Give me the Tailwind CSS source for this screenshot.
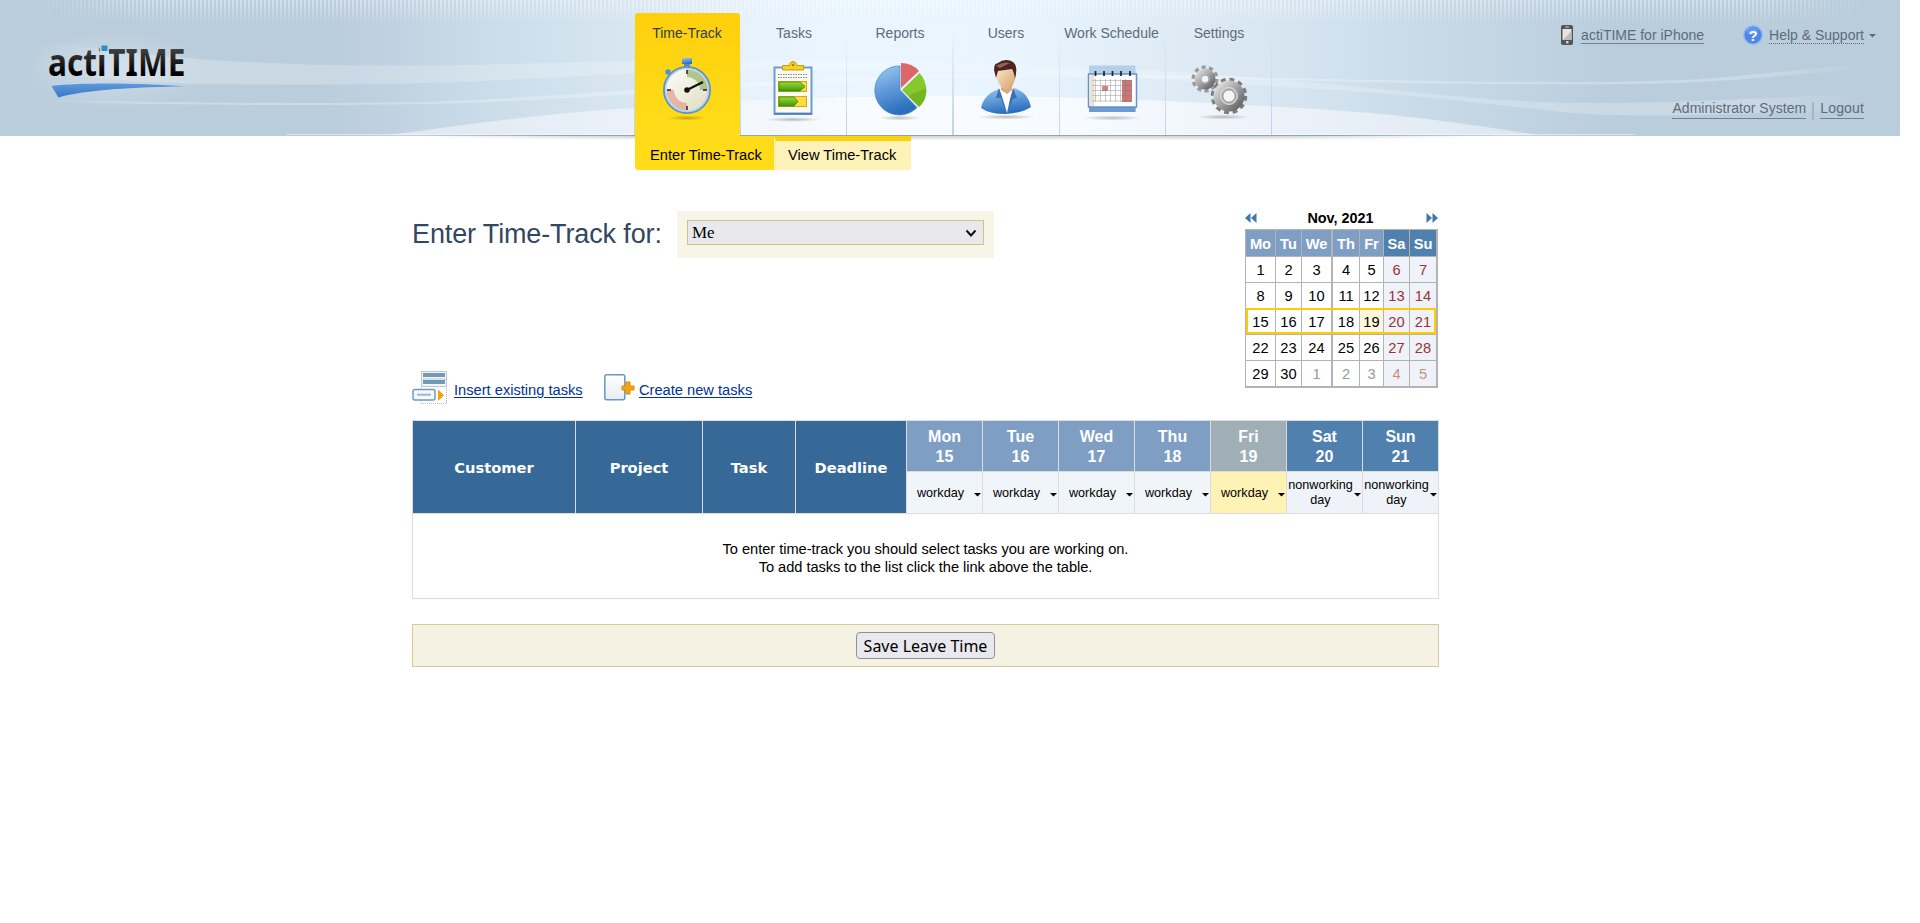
<!DOCTYPE html>
<html lang="en">
<head>
<meta charset="utf-8">
<title>actiTIME - Enter Time-Track</title>
<script src="https://cdn.jsdelivr.net/npm/@tailwindcss/browser@4"></script>
</head>
<body class="bg-white font-['Liberation_Sans',Arial,sans-serif] text-black overflow-hidden">
<header class="relative w-[1900px] h-[170px]">
  <svg class="absolute left-0 top-0" width="1900" height="142" viewBox="0 0 1900 142">
    <defs>
      <linearGradient id="bg"><stop offset="0" stop-color="#bacddc"/><stop offset=".17" stop-color="#bacddc"/><stop offset=".21" stop-color="#c1d2e2"/><stop offset=".26" stop-color="#cbdde9"/><stop offset=".33" stop-color="#d8e6f1"/><stop offset=".39" stop-color="#e6f1fb"/><stop offset=".44" stop-color="#eaf6ff"/><stop offset=".53" stop-color="#e8f4fe"/><stop offset=".6" stop-color="#e0edf7"/><stop offset=".67" stop-color="#d8e6f1"/><stop offset=".75" stop-color="#c8dae8"/><stop offset=".85" stop-color="#bacddc"/><stop offset="1" stop-color="#bacddc"/></linearGradient>
      <linearGradient id="fade" x2="0" y2="1"><stop stop-color="#fff" stop-opacity=".42"/><stop offset="1" stop-color="#fff" stop-opacity="0"/></linearGradient>
      <pattern id="st" width="4" height="24" patternUnits="userSpaceOnUse"><rect width="2" height="24" fill="url(#fade)"/></pattern>
      <linearGradient id="mk"><stop offset=".015" stop-color="#000"/><stop offset=".08" stop-color="#fff"/><stop offset=".92" stop-color="#fff"/><stop offset=".985" stop-color="#000"/></linearGradient>
      <mask id="m"><rect width="1900" height="142" fill="url(#mk)"/></mask>
      <linearGradient id="hill"><stop stop-color="#dfe7ee"/><stop offset=".25" stop-color="#edf3fb"/><stop offset=".4" stop-color="#f8fbff"/><stop offset=".6" stop-color="#f7faff"/><stop offset=".77" stop-color="#edf2fa"/><stop offset="1" stop-color="#dce6ee"/></linearGradient>
      <linearGradient id="ln"><stop stop-color="#8fa5b5" stop-opacity="0"/><stop offset=".15" stop-color="#8fa5b5"/><stop offset=".85" stop-color="#8fa5b5"/><stop offset="1" stop-color="#8fa5b5" stop-opacity="0"/></linearGradient>
      <linearGradient id="sh"><stop stop-color="#aaa" stop-opacity="0"/><stop offset=".2" stop-color="#aaa" stop-opacity=".45"/><stop offset=".8" stop-color="#aaa" stop-opacity=".45"/><stop offset="1" stop-color="#aaa" stop-opacity="0"/></linearGradient>
      <radialGradient id="glow"><stop stop-color="#fff" stop-opacity=".3"/><stop offset="1" stop-color="#fff" stop-opacity="0"/></radialGradient>
      <linearGradient id="dv" x2="0" y2="1"><stop stop-color="#c2cfe6" stop-opacity="0"/><stop offset="1" stop-color="#c2cfe6"/></linearGradient>
    </defs>
    <rect width="1900" height="136" fill="url(#bg)"/>
    <g mask="url(#m)">
      <rect width="1900" height="24" fill="url(#st)"/>
      <path d="M20 42C100 46 150 58 250 62C390 69 480 64 640 61C820 59 1080 61 1280 80C1430 92 1500 104 1600 103C1730 102 1800 95 1900 93V108C1780 112 1640 120 1560 112C1440 98 1370 91 1280 87C1050 70 830 67 640 73C500 80 420 87 200 84C130 83 80 76 20 70Z" fill="#fff" fill-opacity=".22"/>
      <path d="M30 99C180 103 300 104 420 102C560 98 700 82 900 76C1060 72 1160 76 1280 78C1460 82 1620 84 1700 79C1770 74 1820 66 1890 63V67C1820 71 1750 82 1640 84C1480 86 1300 80 1240 79C1050 75 960 77 880 80C710 88 560 101 430 104C300 106 180 105 30 102Z" fill="#fff" fill-opacity=".26"/>
    </g>
    <ellipse cx="115" cy="70" rx="95" ry="40" fill="url(#glow)"/>
    <path d="M388 135C500 120 560 112 635 108C740 100 800 97 950 96C1080 96 1180 101 1280 107C1400 113 1460 123 1538 135Z" fill="url(#hill)"/>
    <rect x="286" y="134" width="1349" height="1" fill="#fff" opacity=".45"/>
    <rect x="400" y="135" width="1100" height="1" fill="url(#ln)"/>
    <rect x="420" y="136" width="1060" height="2" fill="url(#sh)"/>
    <rect x="480" y="138" width="960" height="2" fill="url(#sh)" opacity=".35"/>
    <g fill="url(#dv)"><rect x="634" y="30" width="1" height="105"/><rect x="740" y="30" width="1" height="105"/><rect x="846" y="30" width="1" height="105"/><rect x="952" y="30" width="2" height="105"/><rect x="1059" y="30" width="1" height="105"/><rect x="1165" y="30" width="1" height="105"/><rect x="1271" y="30" width="1" height="105"/></g>
  </svg>

  <div class="relative flex">
    <div class="w-[635px] h-[136px] shrink-0">
      <svg width="240" height="110" viewBox="0 0 240 110">
        <defs><linearGradient id="lg" gradientUnits="userSpaceOnUse" x1="0" y1="48" x2="0" y2="76"><stop stop-color="#444"/><stop offset=".9" stop-color="#000"/></linearGradient><linearGradient id="sw" x2="0" y2="1"><stop stop-color="#5e99d8"/><stop offset="1" stop-color="#3478cf"/></linearGradient><clipPath id="cut"><path d="M40 40H100V90H40ZM100 54H112V90H100ZM109 40H200V90H109Z"/></clipPath></defs>
        <g clip-path="url(#cut)"><text x="48" y="75.7" font-family="Noto Sans" font-weight="700" font-size="37" textLength="137.500" lengthAdjust="spacingAndGlyphs" fill="url(#lg)">acti<tspan dx="1">TIME</tspan></text></g>
        <rect x="101.500" y="45.500" width="6" height="5.500" fill="#2f8acb"/>
        <path d="M51.500 86C85 82.500 140 83 185 86.600C135 87 85 90 58.500 97.500Z" fill="url(#sw)"/>
      </svg>
    </div>
    <div>
      <nav class="flex pt-[13px] h-[136px] text-[14px] leading-4 text-[#5d6c7b]">
        <a class="w-[106px] pr-[2px] flex flex-col items-center pt-3 relative text-[#2f3d48]"><span class="absolute left-0 top-0 w-[105px] h-[124px] rounded-t-[3px] bg-linear-to-b from-[#ffcf0b] to-[#ffdd1a]"></span><span class="relative">Time-Track</span>
          <svg class="relative mt-4" width="64" height="66" viewBox="0 0 64 66"><defs><linearGradient id="fc" x2="1" y2="1"><stop stop-color="#fff"/><stop offset="1" stop-color="#dedbbb"/></linearGradient><radialGradient id="shd"><stop stop-color="#000" stop-opacity=".25"/><stop offset="1" stop-color="#000" stop-opacity="0"/></radialGradient><linearGradient id="bl" x2=".3" y2="1"><stop stop-color="#9ccaf6"/><stop offset="1" stop-color="#2c6fbe"/></linearGradient></defs>
            <ellipse cx="32" cy="61" rx="20" ry="2.500" fill="url(#shd)"/><path d="M27 1H37V7H27Z" fill="url(#bl)"/><rect x="29" y="7" width="6" height="3" fill="#6b8aa2"/><circle cx="13" cy="15" r="2.700" fill="#4f92d7"/><path d="m14 16 4 4" stroke="#4f92d7" stroke-width="2"/>
            <circle cx="32" cy="33" r="23" fill="url(#fc)" stroke="#5a93cd" stroke-width="2"/><circle cx="32" cy="33" r="21.500" fill="none" stroke="#b5cfe6" stroke-width="1.500"/>
            <path d="M32 12.500A20.500 20.500 0 0 1 52.500 33H45A13 13 0 0 0 32 20Z" fill="#9cb56c" opacity=".75"/><path d="M32 53.500A20.500 20.500 0 0 1 11.500 33H19A13 13 0 0 0 32 46Z" fill="#e3aaa0" opacity=".85"/>
            <path d="M32 13v4M32 49v4M12 33h4M48 33h4" stroke="#222" stroke-width="1.500"/><path d="M32 33 48 25" stroke="#111" stroke-width="2.200"/><circle cx="32" cy="33" r="2.800" fill="#111"/></svg></a>
        <a class="w-[106px] flex flex-col items-center pt-3"><span>Tasks</span>
          <svg class="mt-4 mr-[2px]" width="64" height="66" viewBox="0 0 64 66"><defs><linearGradient id="gr" x2="0" y2="1"><stop stop-color="#9bdc3c"/><stop offset="1" stop-color="#3f9808"/></linearGradient></defs><ellipse cx="32" cy="62.500" rx="28" ry="2.500" fill="url(#shd)"/>
            <rect x="13.500" y="10.500" width="37" height="46" fill="#fbfbf2" stroke="#6c9bd0" stroke-width="2"/><path d="M13 57H51" stroke="#3d77b7" stroke-width="1.500"/><path d="M21.500 13V8.500h7q0-4 3.500-4t3.500 4H42.500V13Z" fill="#f7d11d" stroke="#c49a10"/><circle cx="32" cy="8" r="1.300" fill="#a98000"/>
            <path d="M17 17.500H47M17 20.500H47" stroke="#888" stroke-dasharray="1.500 1"/><rect x="17.500" y="24.500" width="28" height="10" fill="#ffdc3b" stroke="#c9ae1c"/><path d="M18 25H39L44 29.500 39 34H18Z" fill="url(#gr)" stroke="#3c8808" stroke-width=".8"/><rect x="17.500" y="39.500" width="28" height="10" fill="#ffdc3b" stroke="#c9ae1c"/><path d="M18 40H33L37 44.500 33 49H18Z" fill="url(#gr)" stroke="#3c8808" stroke-width=".8"/></svg></a>
        <a class="w-[106px] flex flex-col items-center pt-3"><span>Reports</span>
          <svg class="mt-4" width="64" height="66" viewBox="0 0 64 66"><ellipse cx="32" cy="61" rx="21" ry="2.500" fill="url(#shd)"/><path d="M32 33V9A24.500 24.500 0 1 0 49 50.500Z" fill="url(#bl)" stroke="#4a82c4" stroke-width=".7"/><path d="M33 31V6Q44 6 51 14Z" fill="#dc6669"/><path d="M34 33 51.500 16Q58 23 58.500 34 58 44 51 50Z" fill="#87c82c"/><path d="M40 39 58 31Q59 43 51 50Z" fill="#59980c" opacity=".4"/></svg></a>
        <a class="w-[106px] flex flex-col items-center pt-3"><span>Users</span>
          <svg class="mt-4" width="64" height="66" viewBox="0 0 64 66"><defs><linearGradient id="skin" x2="1" y2="1"><stop stop-color="#fbebca"/><stop offset="1" stop-color="#d4a16b"/></linearGradient></defs><ellipse cx="32" cy="60" rx="29" ry="2.500" fill="url(#shd)"/><path d="M7 51Q10 37 25 32L32 50 40 31Q54 35 57 50 48 56 32 57 15 57 7 51Z" fill="url(#bl)"/><path d="M26 31 39 30 38 42 33 56Z" fill="#fff"/><path d="M25 31 22 41 27 41 32 56 28 40ZM39 31 43 41 39 42 33 56 36 42Z" fill="#3b71af"/><path d="M28 25H38V33L33 37 27 33Z" fill="#d8a978"/><path d="M22 12Q31 7 41 12V22Q38 33 33 33 27 33 23 22Z" fill="url(#skin)"/><path d="M21 17Q18 7 24 6 29 2 36 3.500 44 6 42 17L41 22Q40 15 38 12L24 14 22 21Z" fill="#4d2420"/><path d="M22 9Q29 4 36 6L26 11Z" fill="#93635a"/></svg></a>
        <a class="w-[107px] pr-[2px] flex flex-col items-center pt-3"><span class="whitespace-nowrap">Work Schedule</span>
          <svg class="mt-4" width="64" height="66" viewBox="0 0 64 66"><ellipse cx="32" cy="61" rx="29" ry="2.500" fill="url(#shd)"/><rect x="9" y="8.500" width="46.500" height="46" rx="1" fill="#b3cfea"/><rect x="9" y="49" width="46.500" height="6" fill="#6d9ad0"/><rect x="8.500" y="17" width="48" height="33" fill="#fff" stroke="#6393c9" stroke-width="1.500"/><rect x="9.500" y="18" width="5" height="31" fill="#e8e4d5"/><path d="M42 23H52V45H42Z" fill="#cb7575"/><path d="M22 29H28V34H22Z" fill="#d68484"/><path d="M15.500 22V45M20.500 22V45M25.500 22V45M30.500 22V45M35.500 22V45M40.500 22V45M45.500 22V45M12 23.500H52M12 28.500H52M12 33.500H52M12 38.500H52M12 44H52" stroke="#777" stroke-width=".6" opacity=".65"/><path d="M15.500 14v5M24 14v5M32.500 14v5M41 14v5M50 14v5" stroke="#222" stroke-width="1.700"/></svg></a>
        <a class="w-[106px] flex flex-col items-center pt-3"><span>Settings</span>
          <svg class="mt-4 mr-px" width="64" height="66" viewBox="0 0 64 66"><defs><linearGradient id="gy" x2="1" y2="1"><stop stop-color="#ddd"/><stop offset="1" stop-color="#666"/></linearGradient></defs><ellipse cx="36" cy="60" rx="27" ry="2.500" fill="url(#shd)"/><circle cx="18" cy="22" r="11.500" fill="none" stroke="#999" stroke-width="4" stroke-dasharray="4 3.220"/><circle cx="18" cy="22" r="7.500" fill="none" stroke="url(#gy)" stroke-width="6"/><circle cx="18" cy="22" r="4" fill="#edf4fa" stroke="#888" stroke-width=".8"/><circle cx="42" cy="39" r="16" fill="none" stroke="#7b7b7b" stroke-width="4.500" stroke-dasharray="4.600 3.780"/><circle cx="42" cy="39" r="11" fill="none" stroke="url(#gy)" stroke-width="9"/><circle cx="42" cy="39" r="8.500" fill="#bbb" stroke="#ddd"/><circle cx="42" cy="39" r="6.200" fill="#f3f6fb" stroke="#777" stroke-width=".8"/></svg></a>
      </nav>
      <div class="flex h-[34px] text-[14.670px] leading-[38px]">
        <div class="w-[139px] bg-[#ffdb18] rounded-bl-[3px] pl-[15px]">Enter Time-Track</div>
        <div class="w-[137px] bg-[#fff2b8] border-t-5 border-[#fbd30d] border-l-2 border-l-[#ffeeb0] rounded-br-[3px] pl-[12px] leading-[28px]">View Time-Track</div>
      </div>
    </div>
    <div class="w-[629px] pr-[27px] flex flex-col items-end text-[14px] leading-4 text-[#5d6c7b] pt-[25px]">
      <div class="flex items-start h-[73px] mr-[9px]">
        <svg width="12" height="20" viewBox="0 0 12 20"><rect width="12" height="20" rx="2" fill="#555"/><rect x="1.500" y="4" width="9" height="11" fill="#e4e4e2"/><path d="M2 15 10.500 6V15Z" fill="#bbb"/><rect x="4" y="1.500" width="4" height="1" fill="#ccc"/><rect x="5" y="16" width="2.500" height="2.500" fill="#ccc"/></svg>
        <a class="ml-2 mt-[2px] border-b border-[#71818f]">actiTIME for iPhone</a>
        <svg class="ml-[39px]" width="20" height="20" viewBox="0 0 20 20"><circle cx="10" cy="10" r="9.200" fill="#4c86e8" stroke="#91b7ed" stroke-width="1.300"/><ellipse cx="9" cy="6" rx="6" ry="4" fill="#fff" opacity=".15"/><text x="10" y="15.500" text-anchor="middle" font-family="Liberation Sans" font-weight="700" font-size="15" fill="#fff">?</text></svg>
        <a class="ml-[6px] mt-[2px] border-b border-dotted border-[#5d6c7b]">Help &amp; Support</a>
        <svg class="ml-[5px] mt-[9px] -mr-[12px]" width="7" height="4"><path d="M0 0H7L3.500 3.500Z" fill="#5d6c7b"/></svg>
      </div>
      <div class="flex mt-[2px] pr-[9px]">
        <a class="border-b border-[#71818f] h-[19px] tracking-[0.04px]">Administrator System</a><span class="mx-[6px] mt-[2px] w-[2px] h-[18px] bg-[#a7b3bd]"></span><a class="border-b border-[#71818f] h-[19px] tracking-[0.15px]">Logout</a>
      </div>
    </div>
  </div>
</header>

<main class="ml-[412px] w-[1027px]">
  <section class="flex h-[201px] pt-[38px]">
    <h1 class="w-[265px] pt-[10px] text-[27px] tracking-[-0.13px] leading-[33px] text-[#33475f] whitespace-nowrap">Enter Time-Track for:</h1>
    <div class="mt-[3px] w-[317px] h-[47px] bg-[#f7f5e8] px-[10px] pt-[9px]">
      <div class="flex items-center justify-between h-[25px] border border-[#cfc583] bg-[#e9e8ec] pl-[4px] pr-[6px] font-['Liberation_Serif',serif] text-[17px] leading-5">Me<svg width="12" height="8" viewBox="0 0 12 8"><path d="m1.500 1.500 4.500 5 4.500-5" fill="none" stroke="#111" stroke-width="2"/></svg></div>
    </div>
    <div class="ml-auto w-[193px] mr-px text-[14.670px]">
      <div class="flex items-center justify-between h-[21px] pb-[2px] font-bold text-[14.400px]">
        <svg width="12" height="10"><path d="M5.500 0V10L0 5ZM11.500 0V10L6 5Z" fill="#3f78aa"/></svg><span class="mr-[2px] pt-[2px]">Nov, 2021</span><svg width="12" height="10"><path d="M.5 0V10L6 5ZM6.500 0V10L12 5Z" fill="#3f78aa"/></svg>
      </div>
      <div class="relative grid grid-cols-[29px_25px_29px_27px_23px_25px_26px] grid-rows-[26px_25px_25px_25px_25px_25px] gap-x-px gap-y-px bg-[#b3b3b3] pt-px pb-[2px] pl-px pr-[2px] text-center leading-[27px] *:bg-white" id="cal"></div>
    </div>
  </section>

  <div class="flex text-[#003399] text-[14.670px] h-[49px]">
    <svg width="36" height="34" viewBox="0 0 36 34"><rect x="9.500" y=".5" width="25" height="15" fill="#f3f6f9" stroke="#b8c8d6"/><path d="M11 2H33V6H11ZM11 9H33V13H11Z" fill="#7399b9"/><path d="M10 8H34" stroke="#b8c8d6"/><path d="M9 16.500V32.500H34.500V16" fill="none" stroke="#a9bccb" stroke-dasharray="1 1"/><rect x="1" y="18.500" width="22" height="10.500" rx="2" fill="#f5f9fc" stroke="#7299ba" stroke-width="1.500"/><rect x="5" y="22.700" width="14" height="2" fill="#9cb9cf"/><path d="M26 18.500 32 24.200 26 30Z" fill="#f4a206"/></svg>
    <span class="ml-[6px] pt-[8px] w-[150px]"><a class="underline underline-offset-2">Insert existing tasks</a></span>
    <svg class="mt-[3px]" width="32" height="28" viewBox="0 0 32 28"><defs><linearGradient id="pg" x2="0" y2="1"><stop stop-color="#fff"/><stop offset="1" stop-color="#e5edf4"/></linearGradient></defs><rect x=".8" y=".8" width="20" height="25" rx="2" fill="url(#pg)" stroke="#6e96b9" stroke-width="1.500"/><path d="M22 8h4v4h4v4h-4v4h-4v-4h-4v-4h4Z" fill="#f7a50c" stroke="#d98a08"/></svg>
    <span class="ml-[3px] pt-[8px]"><a class="underline underline-offset-2">Create new tasks</a></span>
  </div>

  <section class="bg-[#dcdcdc] p-px grid grid-cols-[162px_126px_92px_110px_repeat(7,75px)] grid-rows-[50px_41px_84px] gap-px text-white font-bold text-center" id="tbl">
    <div class="row-span-2 bg-[#366998] grid place-items-center pt-[2px] font-['DejaVu_Sans',sans-serif] text-[14.670px]">Customer</div>
    <div class="row-span-2 bg-[#366998] grid place-items-center pt-[2px] font-['DejaVu_Sans',sans-serif] text-[14.670px]">Project</div>
    <div class="row-span-2 bg-[#366998] grid place-items-center pt-[2px] font-['DejaVu_Sans',sans-serif] text-[14.670px]">Task</div>
    <div class="row-span-2 bg-[#366998] grid place-items-center pt-[2px] font-['DejaVu_Sans',sans-serif] text-[14.670px]">Deadline</div>
  </section>

  <div class="mt-[25px] h-[43px] border border-[#d3cb98] bg-[#f5f1e3] flex justify-center pt-[7px]">
    <button class="w-[139px] h-[27px] rounded-[4px] border border-[#8f8f9d] bg-[#e9e9ed] font-['Noto_Sans',sans-serif] text-[16px] leading-6 whitespace-nowrap">Save Leave Time</button>
  </div>
</main>

<script>
const cal = document.getElementById('cal');
['Mo','Tu','We','Th','Fr','Sa','Su'].forEach((d, i) => {
  cal.insertAdjacentHTML('beforeend', `<div class="${i > 4 ? '!bg-[#5080ad]' : '!bg-[#7f9ec4]'} ${i === 3 ? 'border-l border-[#b3b3b3]' : ''} text-white font-bold leading-[29px]">${d}</div>`);
});
for (let n = 1; n <= 35; n++) {
  const weekend = (n - 1) % 7 > 4, next = n > 30;
  const c = weekend ? (next ? '!bg-[#eff2f8] text-[#cc8e7c]' : '!bg-[#eff2f8] text-[#993333]') : next ? 'text-[#999]' : n === 19 ? '!bg-[#fff7dc]' : '';
  cal.insertAdjacentHTML('beforeend', `<div class="${c} ${(n - 1) % 7 === 3 ? 'border-l border-[#b3b3b3]' : ''} h-[25px]">${next ? n - 30 : n}</div>`);
}
cal.insertAdjacentHTML('beforeend', '<span class="absolute left-px top-[79px] w-[190px] h-[26px] !bg-transparent border-2 border-[#fc0]"></span>');

const tbl = document.getElementById('tbl');
const days = ['Mon','Tue','Wed','Thu','Fri','Sat','Sun'];
days.forEach((d, i) => {
  const c = i > 4 ? 'bg-[#5080ad]' : i === 4 ? 'bg-[#9fafb5]' : 'bg-[#7f9ec4]';
  tbl.insertAdjacentHTML('beforeend', `<div class="${c} text-[16px] leading-5 pt-[6px]">${d}<br>${15 + i}</div>`);
});
days.forEach((d, i) => {
  const c = i > 4 ? 'bg-[#eff2f8]' : i === 4 ? 'bg-[#fff2b5]' : 'bg-[#f0f5fa]';
  tbl.insertAdjacentHTML('beforeend', `<div class="${c} flex items-center text-black font-normal text-[12.67px] leading-[15px] pt-px"><span class="w-[67px] text-center">${i > 4 ? 'nonworking<br>day' : 'workday'}</span><svg class="mt-[4px]" width="7" height="4"><path d="M0 0H7L3.500 3.500Z"/></svg></div>`);
});
tbl.insertAdjacentHTML('beforeend', '<div class="col-span-11 bg-white text-black font-normal text-[14.67px] tracking-[-0.05px] leading-[18px] pt-[26px]">To enter time-track you should select tasks you are working on.<br>To add tasks to the list click the link above the table.</div>');
</script>
</body>
</html>
